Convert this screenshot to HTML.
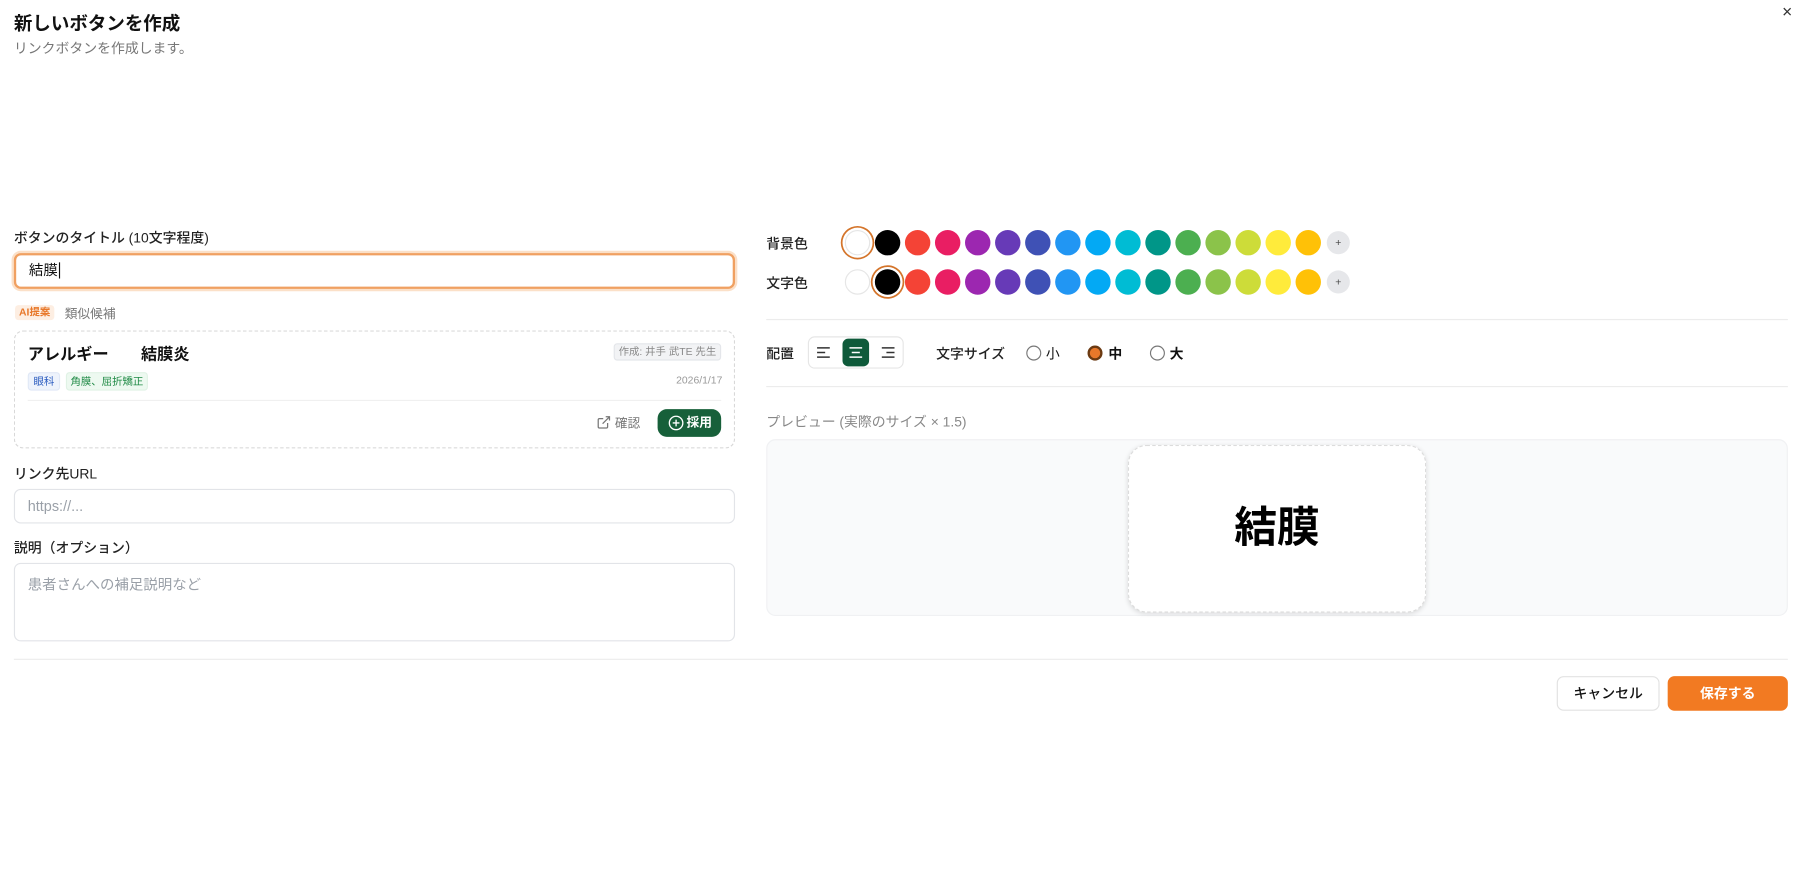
<!DOCTYPE html>
<html><head><meta charset="utf-8"><style>
*{box-sizing:border-box;margin:0;padding:0}
html,body{width:1812px;height:883px;overflow:hidden;background:#fff}
#s{position:absolute;left:0;top:0;width:1570px;height:770px;transform:scale(1.1557);transform-origin:0 0;font-family:"Liberation Sans","Noto Sans CJK JP",sans-serif;color:#111}
.a{position:absolute;white-space:nowrap}
.lbl{font-size:12px;font-weight:500;color:#222}
.inp{position:absolute;border:1px solid #e2e4e8;border-radius:6px;background:#fff;font-size:12.5px;color:#9aa0a8;padding-left:11px}
.sw{position:absolute;width:22px;height:22px;border-radius:50%}
.hr{position:absolute;height:1px;background:#ececec}
.radio{position:absolute;width:13px;height:13px;border-radius:50%;border:1px solid #777;background:#fff}
</style></head><body><div id="s">
<div class="a" style="left:12px;top:7px;font-size:16px;font-weight:700">新しいボタンを作成</div>
<div class="a" style="left:12px;top:33px;font-size:12px;color:#777">リンクボタンを作成します。</div>
<div class="a" style="left:1542px;top:2px;font-size:15px;color:#333">×</div>

<div class="a lbl" style="left:12px;top:197px">ボタンのタイトル (10文字程度)</div>
<div class="inp" style="left:12px;top:219px;width:624px;height:31px;border:2px solid #f0a061;box-shadow:0 0 0 2px #fbe0c8;color:#111;line-height:27px">結膜<span style="border-left:1px solid #111;margin-left:1px"></span></div>
<div class="a" style="left:13px;top:264px;width:34px;height:13px;background:#fdeee2;color:#e8782a;font-size:9px;font-weight:700;border-radius:3px;text-align:center;line-height:13px">AI提案</div>
<div class="a" style="left:56px;top:263px;font-size:11px;color:#777">類似候補</div>

<div class="a" style="left:12px;top:286px;width:624px;height:102px;border:1px dashed #d8d8d8;border-radius:8px"></div>
<div class="a" style="left:24px;top:296px;font-size:14px;font-weight:700">アレルギー　　結膜炎</div>
<div class="a" style="left:531px;top:297px;width:93px;height:15px;background:#f2f3f5;border:1px solid #e4e6ea;border-radius:3px;font-size:9px;color:#888;text-align:center;line-height:13px">作成: 井手 武TE 先生</div>
<div class="a" style="left:24px;top:322px;width:28px;height:16px;background:#eef3fc;border:1px solid #e0e8f6;border-radius:3px;color:#2a5bbf;font-size:9px;text-align:center;line-height:14px">眼科</div>
<div class="a" style="left:57px;top:322px;width:71px;height:16px;background:#edf9f0;border:1px solid #e0f2e5;border-radius:3px;color:#1f8a45;font-size:9px;text-align:center;line-height:14px">角膜、屈折矯正</div>
<div class="a" style="left:585px;top:324px;font-size:9px;color:#999">2026/1/17</div>
<div class="hr" style="left:24px;top:346px;width:600px;background:#f0f0f0"></div>
<svg class="a" style="left:516px;top:359px" width="13" height="13" viewBox="0 0 24 24" fill="none" stroke="#777" stroke-width="2"><path d="M18 13v6a2 2 0 0 1-2 2H5a2 2 0 0 1-2-2V8a2 2 0 0 1 2-2h6M15 3h6v6M10 14L21 3"/></svg>
<div class="a" style="left:532px;top:358px;font-size:11px;color:#777">確認</div>
<div class="a" style="left:569px;top:354px;width:55px;height:24px;background:#17603a;border-radius:8px;color:#fff;font-size:11px;font-weight:700;line-height:24px;padding-left:25px">採用</div>
<svg class="a" style="left:578px;top:359px" width="14" height="14" viewBox="0 0 24 24" fill="none" stroke="#fff" stroke-width="2"><circle cx="12" cy="12" r="10"/><path d="M12 7v10M7 12h10"/></svg>

<div class="a lbl" style="left:12px;top:401px">リンク先URL</div>
<div class="inp" style="left:12px;top:423px;width:624px;height:30px;line-height:28px">https://...</div>
<div class="a lbl" style="left:12px;top:465px">説明（オプション）</div>
<div class="inp" style="left:12px;top:487px;width:624px;height:68px;padding-top:7px">患者さんへの補足説明など</div>

<div class="a lbl" style="left:663px;top:202px">背景色</div>
<div class="a lbl" style="left:663px;top:236px">文字色</div>
<div id="sw"></div>
<div class="hr" style="left:663px;top:276px;width:884px"></div>
<div class="a lbl" style="left:663px;top:297px">配置</div>
<div class="a" style="left:699px;top:291px;width:83px;height:28px;border:1px solid #e6e6e6;border-radius:6px"></div>
<div class="a" style="left:729px;top:293px;width:23px;height:24px;background:#0e5a3a;border-radius:5px"></div>
<svg class="a" style="left:706px;top:299px" width="13" height="12" stroke="#333" stroke-width="1.3"><path d="M1 2h11M1 6h7M1 10h11"/></svg>
<svg class="a" style="left:734px;top:299px" width="13" height="12" stroke="#fff" stroke-width="1.3"><path d="M1 2h11M3 6h7M1 10h11"/></svg>
<svg class="a" style="left:762px;top:299px" width="13" height="12" stroke="#333" stroke-width="1.3"><path d="M1 2h11M5 6h7M1 10h11"/></svg>
<div class="a lbl" style="left:810px;top:297px">文字サイズ</div>
<div class="radio" style="left:888px;top:299px"></div><div class="a" style="left:905px;top:297px;font-size:12px">小</div>
<div class="radio" style="left:941px;top:299px;border:2px solid #6b3a12;background:#e8782a"></div><div class="a" style="left:959px;top:297px;font-size:12px;font-weight:700">中</div>
<div class="radio" style="left:995px;top:299px"></div><div class="a" style="left:1012px;top:297px;font-size:12px;font-weight:700">大</div>
<div class="hr" style="left:663px;top:334px;width:884px"></div>
<div class="a" style="left:663px;top:356px;font-size:12px;color:#888">プレビュー (実際のサイズ × 1.5)</div>
<div class="a" style="left:663px;top:380px;width:884px;height:153px;background:#f9fafb;border:1px solid #f0f1f3;border-radius:8px"></div>
<div class="a" style="left:976px;top:385px;width:258px;height:145px;background:#fff;border:1.5px dashed #dcdcdc;border-radius:16px;box-shadow:0 1px 4px rgba(0,0,0,.12);text-align:center;line-height:142px;font-size:37px;font-weight:700;color:#000">結膜</div>

<div class="hr" style="left:12px;top:570px;width:1535px"></div>
<div class="a" style="left:1347px;top:585px;width:89px;height:30px;border:1px solid #e2e2e2;border-radius:6px;text-align:center;line-height:28px;font-size:12px;font-weight:500">キャンセル</div>
<div class="a" style="left:1443px;top:585px;width:104px;height:30px;background:#f27a22;border-radius:6px;text-align:center;line-height:30px;font-size:12px;font-weight:700;color:#fff">保存する</div>
</div>
<script>
var c=["#fff","#000","#f44336","#e91e63","#9c27b0","#673ab7","#3f51b5","#2196f3","#03a9f4","#00bcd4","#009688","#4caf50","#8bc34a","#cddc39","#ffeb3b","#ffc107"];
var h="";[210,244].forEach(function(y,r){c.forEach(function(col,i){var x=742+i*26;var sel=(r==0&&i==0)||(r==1&&i==1);var st="left:"+(x-11)+"px;top:"+(y-11)+"px;background:"+col+";";if(col=="#fff")st+="border:1px solid #e6e6e6;";if(sel)st+="box-shadow:0 0 0 2px #fff,0 0 0 3.5px #d4742a;";h+='<div class="sw" style="'+st+'"></div>';});h+='<div class="sw" style="left:1148px;top:'+(y-10)+'px;width:20px;height:20px;background:#e6e7ea;font-size:9px;text-align:center;line-height:20px;color:#444">+</div>';});
document.getElementById("sw").outerHTML=h;
</script>
</body></html>
